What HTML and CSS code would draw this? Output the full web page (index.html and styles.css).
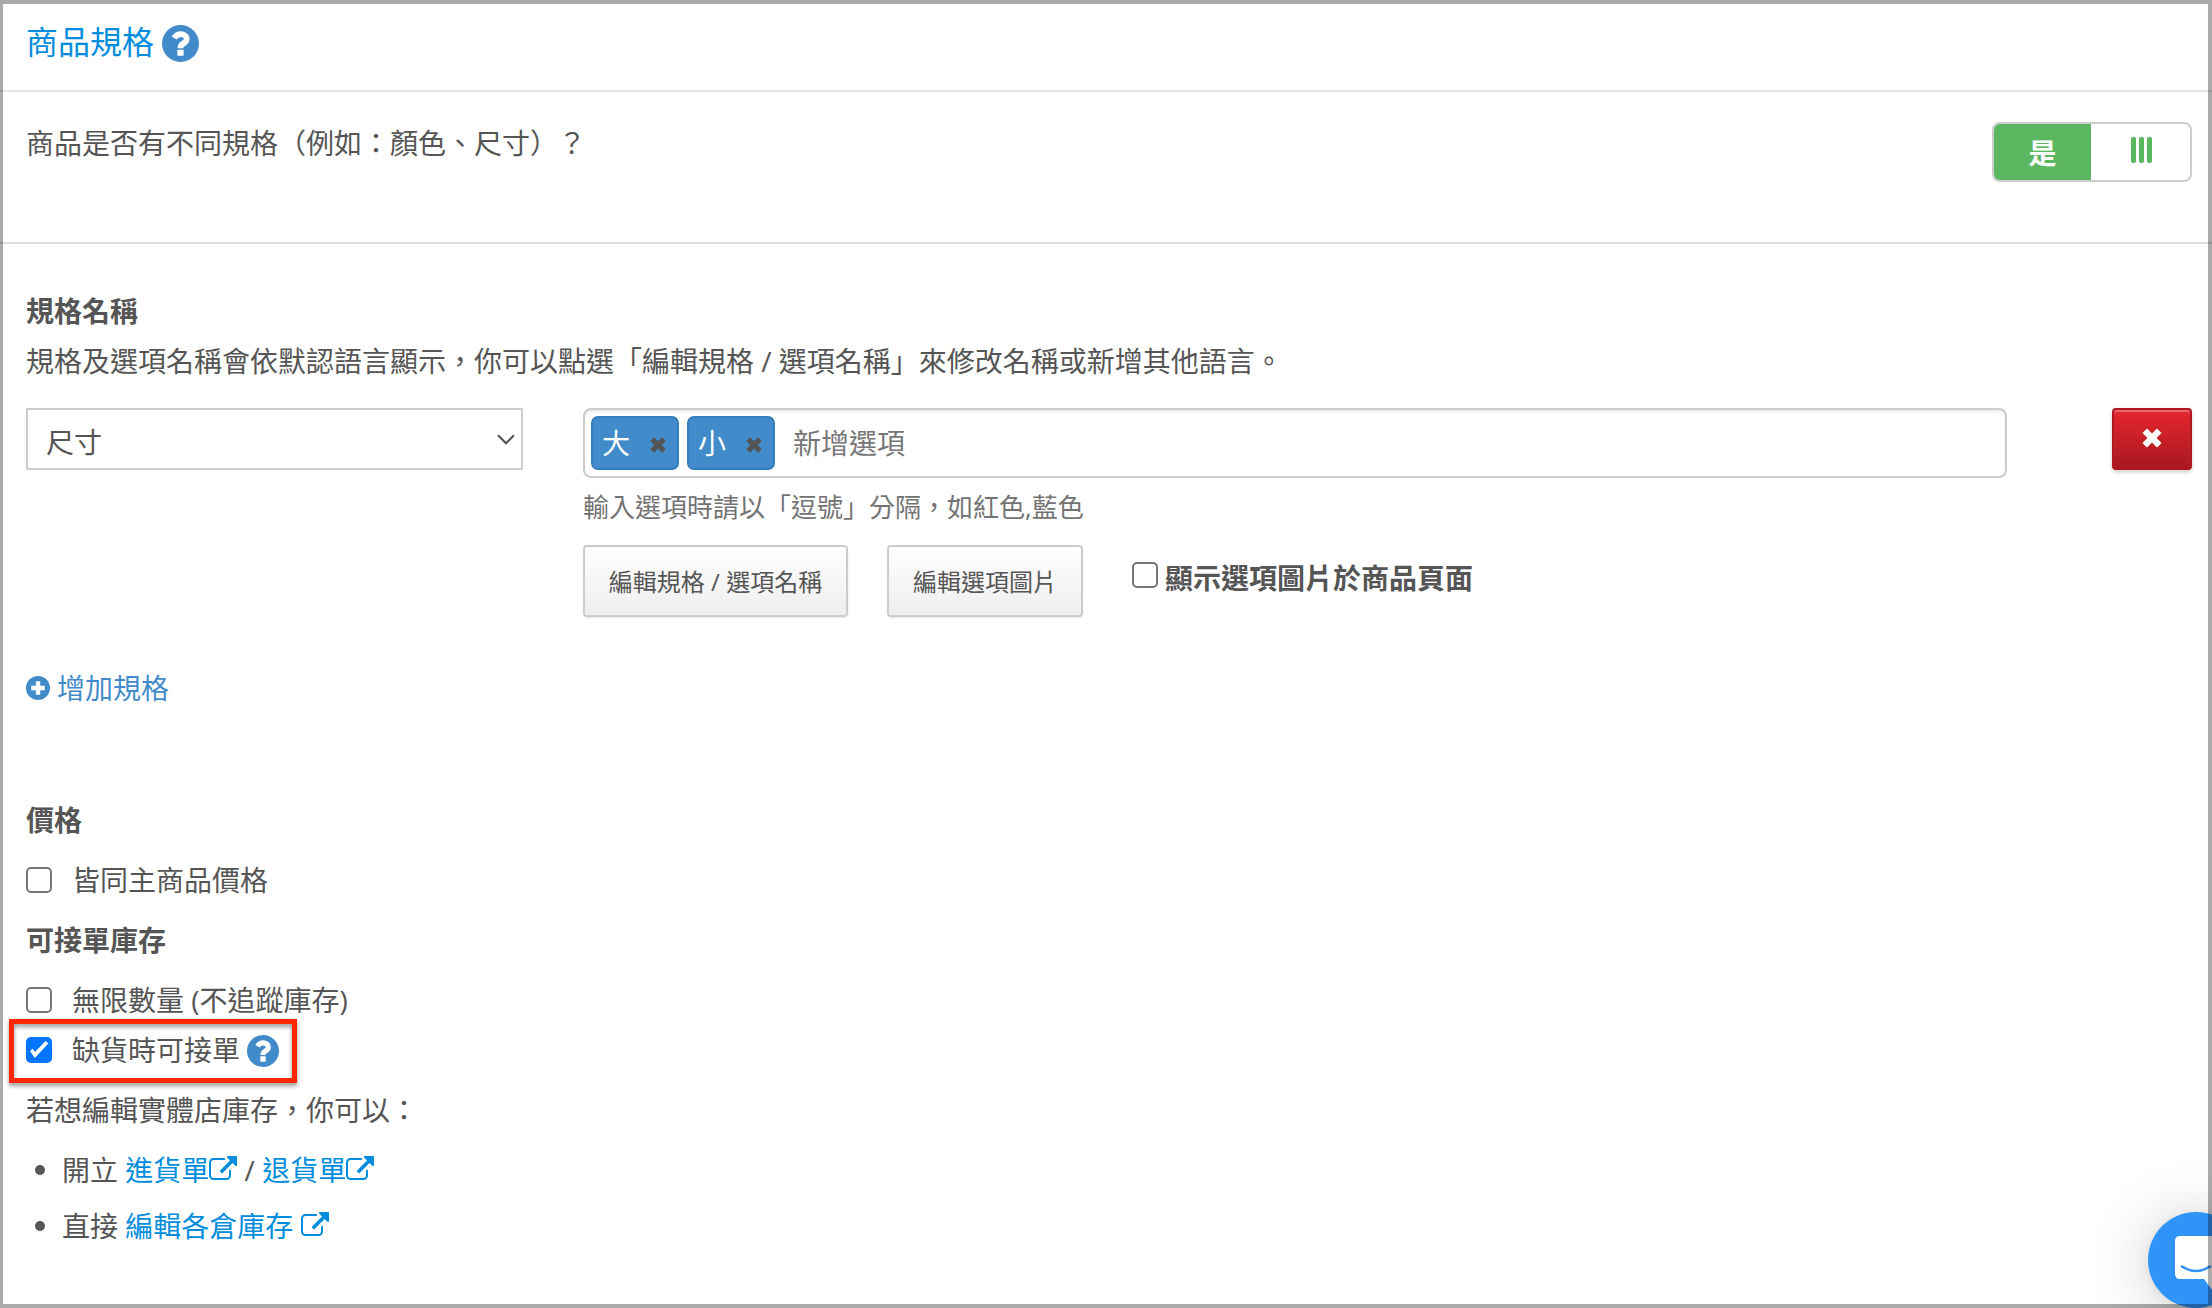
FILE: index.html
```html
<!DOCTYPE html>
<html lang="zh-Hant">
<head>
    <meta charset="UTF-8">
    <meta name="viewport" content="width=device-width, initial-scale=1.0">
    <title>商品規格</title>
    <link rel="stylesheet" href="styles.css">
</head>
<body>
    <!-- shared icons -->
    <svg class="sprite" aria-hidden="true">
        <symbol id="icon-help" viewBox="0 0 24 24">
            <circle cx="12" cy="12" r="12" fill="#428bca"/>
            <path d="M7.9 8.5C8.9 6.8 10.2 5.9 12.1 5.9C14.3 5.9 16 7.3 16 9C16 10.9 14.8 11.5 13.7 12.1C12.6 12.7 12 13.5 12 15" fill="none" stroke="#fff" stroke-width="3.8"/>
            <rect x="10" y="16" width="4" height="4" rx=".4" fill="#fff"/>
        </symbol>
        <symbol id="icon-remove" viewBox="0 0 20 20">
            <path d="M2.7 2.7L17.3 17.3M17.3 2.7L2.7 17.3" fill="none" stroke="currentColor" stroke-width="6.4"/>
        </symbol>
        <symbol id="icon-external" viewBox="0 0 1792 1792">
            <path fill="currentColor" d="M1408 928v320q0 119-84.500 203.500t-203.500 84.500h-832q-119 0-203.500-84.500t-84.500-203.500v-832q0-119 84.500-203.500t203.500-84.500h704q14 0 23 9t9 23v64q0 14-9 23t-23 9h-704q-66 0-113 47t-47 113v832q0 66 47 113t113 47h832q66 0 113-47t47-113v-320q0-14 9-23t23-9h64q14 0 23 9t9 23zm384-864v512q0 26-19 45t-45 19-45-19l-176-176-652 652q-10 10-23 10t-23-10l-114-114q-10-10-10-23t10-23l652-652-176-176q-19-19-19-45t19-45 45-19h512q26 0 45 19t19 45z"/>
        </symbol>
    </svg>

    <div class="panel">
        <div class="panel-header">
            <h1>商品規格</h1>
            <svg class="help-lg"><use href="#icon-help"/></svg>
        </div>

        <div class="question-row">
            <p>商品是否有不同規格（例如：顏色、尺寸）？</p>
            <div class="switch">
                <span class="switch-on">是</span>
                <span class="switch-handle"><i></i><i></i><i></i></span>
            </div>
        </div>

        <div class="panel-body">
            <h2>規格名稱</h2>
            <p class="description">規格及選項名稱會依默認語言顯示，你可以點選「編輯規格 / 選項名稱」來修改名稱或新增其他語言。</p>

            <div class="spec-row">
                <div class="select">
                    <span>尺寸</span>
                    <svg class="chevron" viewBox="0 0 18 11"><path d="M1 1.300L9 9.300L17 1.300" fill="none" stroke="#555" stroke-width="2.200"/></svg>
                </div>

                <div class="spec-options">
                    <div class="tags-input">
                        <span class="tag">大<svg><use href="#icon-remove"/></svg></span>
                        <span class="tag">小<svg><use href="#icon-remove"/></svg></span>
                        <span class="placeholder">新增選項</span>
                    </div>
                    <p class="hint">輸入選項時請以「逗號」分隔，如紅色,藍色</p>
                    <div class="actions">
                        <button class="btn btn-names">編輯規格 / 選項名稱</button>
                        <button class="btn btn-images">編輯選項圖片</button>
                        <label class="show-images"><input type="checkbox">顯示選項圖片於商品頁面</label>
                    </div>
                </div>

                <button class="btn-delete"><svg><use href="#icon-remove"/></svg></button>
            </div>

            <a class="add-spec">
                <svg viewBox="0 0 24 24"><circle cx="12" cy="12" r="12" fill="#428bca"/><path d="M12 5.200V18.800M5.200 12H18.800" stroke="#fff" stroke-width="4.400"/></svg>
                <span>增加規格</span>
            </a>

            <h3 class="price-title">價格</h3>
            <label class="check-row"><input type="checkbox">皆同主商品價格</label>
            <h3>可接單庫存</h3>
            <label class="check-row"><input type="checkbox">無限數量 (不追蹤庫存)</label>
            <label class="check-row check-backorder">
                <input type="checkbox" checked>缺貨時可接單
                <svg class="help-sm"><use href="#icon-help"/></svg>
                <span class="highlight"></span>
            </label>
            <p class="stock-note">若想編輯實體店庫存，你可以：</p>
            <ul class="stock-links">
                <li>開立 <a>進貨單<svg><use href="#icon-external"/></svg></a> / <a>退貨單<svg><use href="#icon-external"/></svg></a></li>
                <li>直接 <a>編輯各倉庫存 <svg><use href="#icon-external"/></svg></a></li>
            </ul>
        </div>
    </div>

    <div class="chat-launcher">
        <svg viewBox="0 0 96 96">
            <path d="M32 24H70V86L56 67H32Q27 67 27 62V29Q27 24 32 24Z" fill="#fff"/>
            <path d="M34 54.500Q48 63.500 62 54.500" fill="none" stroke="#3093f8" stroke-width="2.600" stroke-linecap="round"/>
        </svg>
    </div>
    <div class="frame"></div>
</body>
</html>
```
FILE: styles.css
```css
:root {
    --text: #555;
    --link: #008ddd;
    --primary: #428bca;
    --success: #5cb860;
    --border: #ccc;
}

* {
    box-sizing: border-box;
    margin: 0;
    padding: 0;
}

body {
    font-family: "Open Sans", "Noto Sans CJK TC", sans-serif;
    font-size: 28px;
    color: var(--text);
    background: #fff;
    height: 1308px;
    overflow: hidden;
}

.sprite {
    display: none;
}

svg {
    flex: none;
}

.panel-header {
    display: flex;
    align-items: center;
    gap: 8px;
    height: 92px;
    padding: 0 26px 6px;
    border-bottom: 2px solid #e5e5e5;
}

h1 {
    font-size: 32px;
    font-weight: 400;
    line-height: 40px;
    color: var(--link);
}

.help-lg {
    width: 37px;
    height: 37px;
    margin-top: 3px;
}

.question-row {
    display: flex;
    justify-content: space-between;
    align-items: flex-start;
    height: 152px;
    padding: 30px 20px 0 26px;
    border-bottom: 2px solid #ddd;
    line-height: 42px;
}

.switch {
    display: flex;
    width: 200px;
    height: 60px;
    border: 2px solid var(--border);
    border-radius: 8px;
    overflow: hidden;
}

.switch-on {
    width: 97px;
    line-height: 58px;
    text-align: center;
    font-weight: 700;
    color: #fff;
    background: var(--success);
}

.switch-handle {
    flex: 1;
    display: flex;
    justify-content: center;
    gap: 3px;
    padding: 13px 0 0 1px;
}

.switch-handle i {
    width: 5px;
    height: 26px;
    border-radius: 2px;
    background: var(--success);
}

.panel-body {
    padding: 42px 20px 0 26px;
}

h2,
.description {
    font-size: 28px;
    line-height: 50px;
}

.spec-row {
    display: flex;
    align-items: flex-start;
    margin-top: 22px;
}

.select {
    display: flex;
    justify-content: space-between;
    align-items: center;
    width: 497px;
    height: 62px;
    padding: 3px 6px 0 18px;
    border: 2px solid var(--border);
}

.chevron {
    width: 18px;
    height: 11px;
    margin-bottom: 3px;
}

.spec-options {
    width: 1424px;
    margin: 0 105px 0 60px;
}

.tags-input {
    display: flex;
    align-items: center;
    gap: 8px;
    height: 70px;
    padding: 0 6px;
    border: 2px solid var(--border);
    border-radius: 8px;
    box-shadow: inset 0 2px 2px rgba(0, 0, 0, 0.075);
}

.tag {
    display: flex;
    align-items: center;
    justify-content: space-between;
    width: 88px;
    height: 54px;
    padding: 0 11px 2px 9px;
    border: 2px solid #357ebd;
    border-radius: 7px;
    color: #fff;
    background: var(--primary);
}

.tag svg {
    width: 16px;
    height: 16px;
    margin-top: 5px;
    color: #555;
}

.placeholder {
    margin-left: 10px;
    padding-bottom: 2px;
    color: #777;
}

.hint {
    margin-top: 11px;
    font-size: 26px;
    line-height: 36px;
    color: #737373;
}

.actions {
    display: flex;
    align-items: flex-start;
    margin-top: 20px;
}

.btn {
    height: 72px;
    padding-bottom: 2px;
    font-family: inherit;
    font-size: 24px;
    color: var(--text);
    border: 2px solid var(--border);
    border-radius: 4px;
    background: linear-gradient(#fff, #eee);
    box-shadow: 0 1px 2px rgba(0, 0, 0, 0.1);
}

.btn-names {
    width: 265px;
}

.btn-images {
    width: 196px;
    margin-left: 39px;
}

.show-images {
    display: flex;
    gap: 7px;
    margin: 12px 0 0 49px;
    font-weight: 700;
    line-height: 42px;
}

input[type="checkbox"] {
    flex: none;
    display: block;
    width: 26px;
    height: 26px;
    appearance: none;
    border: 2px solid #767676;
    border-radius: 5px;
    background: #fff;
}

input[type="checkbox"]:checked {
    border: none;
    background: #0075ff;
}

/* check mark */
input[type="checkbox"]:checked::before {
    content: "";
    display: block;
    width: 26px;
    height: 26px;
    background: #fff;
    clip-path: polygon(4px 14px, 6.7px 11.8px, 9px 15px, 19.5px 4px, 22.5px 6.2px, 8.8px 21px);
}

.show-images input {
    margin-top: 5px;
}

.btn-delete {
    display: flex;
    align-items: center;
    justify-content: center;
    width: 80px;
    height: 62px;
    padding-bottom: 2px;
    border: 2px solid #b0171f;
    border-radius: 4px;
    color: #fff;
    background: linear-gradient(#e62630, #a81820);
    box-shadow: inset 0 2px 1px rgba(255, 255, 255, 0.3), 0 2px 4px rgba(0, 0, 0, 0.2);
}

.btn-delete svg {
    width: 20px;
    height: 20px;
}

.add-spec {
    display: flex;
    align-items: center;
    gap: 7px;
    margin-top: 51px;
    line-height: 40px;
    color: var(--primary);
}

.add-spec svg {
    width: 24px;
    height: 24px;
}

h3 {
    font-size: 28px;
    line-height: 60px;
}

.price-title {
    margin-top: 82px;
}

.check-row {
    position: relative;
    display: flex;
    align-items: center;
    line-height: 60px;
}

.check-row input {
    margin-right: 20px;
}

.check-backorder {
    line-height: 40px;
}

.help-sm {
    width: 32px;
    height: 32px;
    margin: 1px 0 0 7px;
}

/* red outline around the backorder option */
.highlight {
    position: absolute;
    left: -17px;
    top: -11px;
    width: 288px;
    height: 64px;
    border: 5px solid #ff2600;
    filter: drop-shadow(0 3px 2px rgba(0, 0, 0, 0.4));
}

.stock-note {
    margin-top: 10px;
    line-height: 60px;
}

.stock-links {
    margin-top: 2px;
    line-height: 56px;
    list-style: none;
}

.stock-links li {
    display: flex;
    align-items: center;
    white-space: pre;
}

.stock-links li::before {
    content: "";
    width: 10px;
    height: 10px;
    margin: 0 17px 0 9px;
    border-radius: 50%;
    background: var(--text);
}

.stock-links a {
    display: flex;
    align-items: center;
    color: var(--link);
}

.stock-links svg {
    width: 28px;
    height: 28px;
}

.chat-launcher {
    position: fixed;
    left: 2148px;
    top: 1212px;
    width: 96px;
    height: 96px;
    border-radius: 50%;
    background: #3093f8;
    box-shadow: 0 2px 12px rgba(0, 0, 0, 0.08), 0 4px 64px rgba(0, 0, 0, 0.2);
}

.chat-launcher svg {
    display: block;
}

.frame {
    position: fixed;
    inset: 0;
    border: 4px solid rgba(0, 0, 0, 0.335);
    border-left-width: 3px;
    pointer-events: none;
}
```
